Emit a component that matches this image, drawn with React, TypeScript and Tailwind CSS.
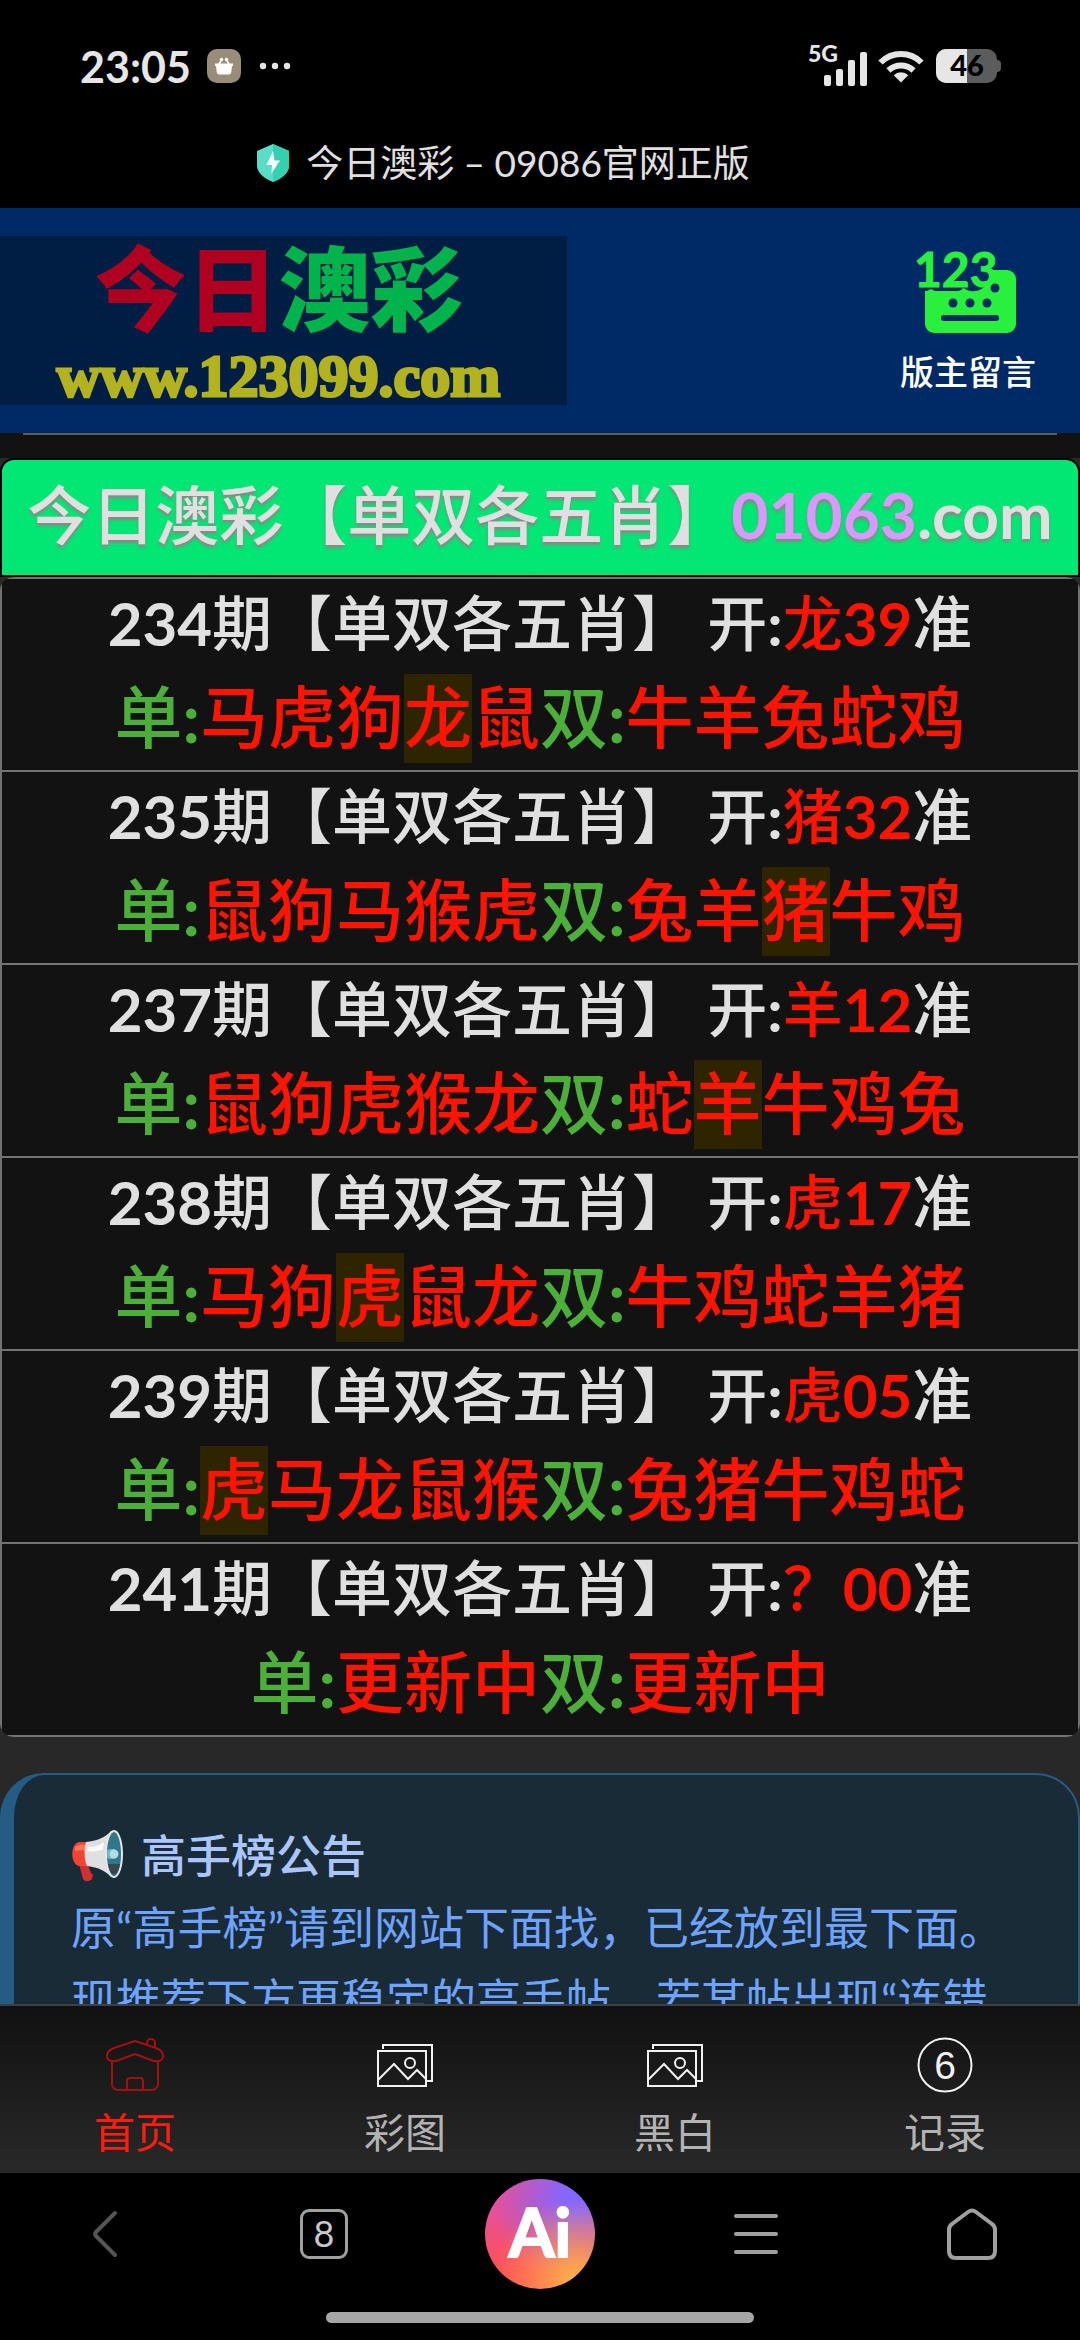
import React from 'react';

interface Draw {
  issue: string;
  animal: string;
  number: string;
  odd: string;
  even: string;
  hit?: string;
}

const draws: Draw[] = [
  { issue: '234', animal: '龙', number: '39', odd: '马虎狗龙鼠', even: '牛羊兔蛇鸡', hit: '龙' },
  { issue: '235', animal: '猪', number: '32', odd: '鼠狗马猴虎', even: '兔羊猪牛鸡', hit: '猪' },
  { issue: '237', animal: '羊', number: '12', odd: '鼠狗虎猴龙', even: '蛇羊牛鸡兔', hit: '羊' },
  { issue: '238', animal: '虎', number: '17', odd: '马狗虎鼠龙', even: '牛鸡蛇羊猪', hit: '虎' },
  { issue: '239', animal: '虎', number: '05', odd: '虎马龙鼠猴', even: '兔猪牛鸡蛇', hit: '虎' },
  { issue: '241', animal: '？', number: '00', odd: '更新中', even: '更新中' },
];

const StatusBar: React.FC = () => (
  <div className="flex items-center justify-between h-[132px] pl-[80px] pr-[78px] text-[#e6e6e6]">
    <div className="flex items-center">
      <span className="text-[43px] leading-none font-bold">23:05</span>
      <svg className="ml-[16px]" width="34" height="34" viewBox="0 0 34 34">
        <rect width="34" height="34" rx="10" fill="#998c78" />
        <path d="M8 14.500h18v2.500h-1l-.8 6.500a2.500 2.500 0 0 1-2.500 2H12.300a2.500 2.500 0 0 1-2.500-2L9 17H8z" fill="#fff" />
        <path d="M12 15l2.500-4M22 15l-2.500-4" stroke="#fff" strokeWidth="1.600" />
        <circle cx="14.500" cy="10.500" r="1.700" fill="#fff" />
        <circle cx="19.500" cy="10.500" r="1.700" fill="#fff" />
      </svg>
      <svg className="ml-[18px]" width="32" height="8" viewBox="0 0 32 8" fill="currentColor">
        <circle cx="4" cy="4" r="3.200" />
        <circle cx="16" cy="4" r="3.200" />
        <circle cx="28" cy="4" r="3.200" />
      </svg>
    </div>
    <div className="flex items-center">
      <svg className="overflow-visible" width="60" height="50" viewBox="0 -4 60 50" fill="currentColor">
        <text x="0" y="17" fontSize="23" fontWeight="900">5G</text>
        <rect x="16" y="30" width="7" height="11" rx="2" />
        <rect x="28" y="24" width="7" height="17" rx="2" />
        <rect x="40" y="15" width="7" height="26" rx="2" />
        <rect x="52" y="7" width="7" height="34" rx="2" />
      </svg>
      <svg className="ml-[10px]" width="46" height="34" viewBox="0 0 46 34" fill="none" stroke="currentColor" strokeWidth="6">
        <path d="M2.500 13.500a29 29 0 0 1 41 0" />
        <path d="M10.500 21.500a18 18 0 0 1 25 0" />
        <path d="M23 33.500l-7.300-7.300a10.500 10.500 0 0 1 14.600 0z" fill="currentColor" stroke="none" />
      </svg>
      <svg className="ml-[12px]" width="66" height="36" viewBox="0 0 66 36">
        <defs>
          <clipPath id="battery">
            <rect y="1" width="61" height="34" rx="10" />
          </clipPath>
        </defs>
        <g clipPath="url(#battery)">
          <rect width="61" height="36" fill="#5c5c5c" />
          <rect width="31" height="36" fill="#e6e6e6" />
        </g>
        <path d="M61 12a4 4 0 0 1 4 4v4a4 4 0 0 1-4 4z" fill="#5c5c5c" />
        <text x="31" y="28" fontSize="29" fontWeight="900" textAnchor="middle" fill="#000">46</text>
      </svg>
    </div>
  </div>
);

const TitleBar: React.FC = () => (
  <div className="flex items-center justify-center gap-[16px] h-[76px] pb-[14px] pr-[74px]">
    <svg width="34" height="40" viewBox="0 0 34 40">
      <path d="M17 1L33 8v15c0 7-8 13-16 16C9 36 1 30 1 23V8z" fill="#5bdcc9" />
      <path d="M17 1L33 8v15c0 7-8 13-16 16z" fill="#35d0b0" />
      <path d="M17 8L10.500 22H16l-.500 8.500L24 17.500h-5.500z" fill="#fff" />
    </svg>
    <h1 className="text-[37px] leading-[56px] text-[#e0e0e0]">今日澳彩 – 09086官网正版</h1>
  </div>
);

const SiteHeader: React.FC = () => (
  <header className="flex items-center justify-between bg-[#002a66] h-[225px] pr-[44px]">
    <a href="#home" className="flex flex-col items-center bg-[#001d43] w-[567px] h-[169px] pr-[10px]">
      <span className="text-[92px] leading-[106px] font-black">
        <span className="text-[#b00020]">今日</span>
        <span className="text-[#00b34a]">澳彩</span>
      </span>
      <span className="font-['Liberation_Serif',serif] text-[60px] leading-[68px] font-bold text-[#b3b31f] [-webkit-text-stroke:3px_#b3b31f]">
        www.123099.com
      </span>
    </a>
    <a href="#message" className="flex flex-col items-center gap-[15px] pt-[4px] text-white">
      <svg className="overflow-visible" width="106" height="84" viewBox="0 0 106 84">
        <rect x="10" y="19" width="91" height="63" rx="9" fill="#28f03c" />
        <path d="M0 0h76v14c3 14-7 28-20 26-4 0-6-3-8-3-2 3-5 3-8 3H20l-4-2-4 2H0z" fill="#002a66" />
        <text x="-1" y="36" fontSize="48" fontWeight="700" fill="#28f03c" stroke="#28f03c" strokeWidth="1">123</text>
        <g fill="#002a66">
          <circle cx="80" cy="37" r="4.500" />
          <circle cx="38" cy="52" r="4.500" />
          <circle cx="55" cy="52" r="4.500" />
          <circle cx="72" cy="52" r="4.500" />
          <rect x="26" y="64" width="58" height="6" rx="3" />
        </g>
      </svg>
      <span className="text-[34px] leading-[44px] font-medium">版主留言</span>
    </a>
  </header>
);

const Zodiac: React.FC<{ text: string; hit?: string }> = ({ text, hit }) => (
  <span className="text-[#ff1400]">
    {text.split('').map((ch) =>
      ch === hit ? (
        <mark key={ch} className="inline-block pb-[3px] -mb-[3px] bg-[#2e2400] text-[#ff1400]">{ch}</mark>
      ) : (
        ch
      )
    )}
  </span>
);

const DrawTable: React.FC = () => (
  <section className="bg-[#2a2a2a]">
    <h2 className="flex items-center justify-center h-[119px] pb-[6px] rounded-t-[14px] border-2 border-black bg-[#02e673] text-[64px] leading-none font-medium text-[#e0e0e0] whitespace-nowrap [text-shadow:0_3px_3px_#888]">
      今日澳彩【单双各五肖】
      <span className="font-bold text-[#d999ff]">01063</span>
      <span className="font-bold">.com</span>
    </h2>
    <div className="rounded-[14px] overflow-hidden">
      <table className="w-full border-separate border-spacing-0 border-x-2 border-b-2 border-[#737373] bg-[#121212] text-center font-medium">
        <tbody>
          {draws.map((d) => (
            <tr key={d.issue}>
              <td className="border-t-2 border-[#737373] p-0 pb-[7px]">
                <p className="text-[60px] leading-[89px] text-[#e0e0e0] whitespace-nowrap">
                  <b>{d.issue}</b>期【单双各五肖】 开<b>:</b>
                  <span className="text-[#ff1400]">{d.animal}<b>{d.number}</b></span>准
                </p>
                <p className="mt-[6px] pb-[3px] text-[68px] leading-[86px] text-[#4caf3a] whitespace-nowrap">
                  单<b>:</b><Zodiac text={d.odd} hit={d.hit} />双<b>:</b><Zodiac text={d.even} hit={d.hit} />
                </p>
              </td>
            </tr>
          ))}
        </tbody>
      </table>
    </div>
  </section>
);

const Megaphone: React.FC = () => (
  <svg width="52" height="52" viewBox="0 0 52 52">
    <path d="M8 34l8-1 4 10 2 2-1 4c-3 3-7 3-9 0z" fill="#d32f2f" />
    <path d="M16 12H8c-9 2-9 22 0 24h9z" fill="#f44336" />
    <path d="M4 17c3-3 8-3 13-2v6C12 20 8 20 4 21z" fill="#ff7555" />
    <path d="M15 12c10-1 19-4 25-11v46c-6-7-15-10-24-11-3-6-3-18-1-24z" fill="#e0e0e0" />
    <path d="M17 17c7 0 12-2 16-5l-1 8c-6 1-11 2-16 1z" fill="#fafafa" />
    <ellipse cx="43" cy="24" rx="8" ry="23" fill="#2f7889" stroke="#e6e6e6" strokeWidth="2" />
    <path d="M37 34c2 14 10 14 12 0z" fill="#37474f" />
    <rect x="36" y="19" width="9" height="10" rx="3" fill="#6fb3c8" />
    <circle cx="43" cy="24" r="4.500" fill="#b3dbe8" />
  </svg>
);

const Notice: React.FC = () => (
  <section className="mt-[36px] rounded-[44px] border-2 border-l-[14px] border-[#235c85] bg-[#192b36] px-[57px] py-[45px] text-[45px] leading-[72px] text-[#6ea3ff]">
    <h3 className="flex items-center gap-[18px] font-medium text-[#abc5ff]">
      <Megaphone />
      高手榜公告
    </h3>
    <p className="whitespace-nowrap">
      原“高手榜”请到网站下面找，已经放到最下面。
      <br />
      现推荐下方更稳定的高手帖，若某帖出现“连错
    </p>
  </section>
);

const HouseIcon: React.FC = () => (
  <svg width="60" height="56" viewBox="0 0 60 56" fill="none" stroke="#a31010" strokeWidth="2" strokeLinejoin="round">
    <path d="M30 4L51 11c9 3 9 13 2 13-3 1-5 0-7-1L30 17 14 23c-2 1-4 2-7 1-7 0-7-10 2-13z" />
    <path d="M42 8V6a4 4 0 0 1 8 0v5" />
    <path d="M7 24v23a6 6 0 0 0 6 6h34a6 6 0 0 0 6-6V24" />
    <path d="M22 53V44a3 3 0 0 1 3-3h10a3 3 0 0 1 3 3v9" />
  </svg>
);

const PictureIcon: React.FC = () => (
  <svg width="60" height="56" viewBox="0 0 60 56" fill="none" stroke="#f2f2f2" strokeWidth="2">
    <rect x="3" y="14" width="48" height="35" />
    <path d="M8 12V8h49v36h-5" />
    <path d="M3 43l16-16 14 15 9-9 9 9" />
    <circle cx="35" cy="26" r="5" />
  </svg>
);

const SixIcon: React.FC = () => (
  <svg width="60" height="56" viewBox="0 0 60 56">
    <circle cx="30" cy="28" r="26.500" fill="none" stroke="#f2f2f2" strokeWidth="2" />
    <text x="30" y="42" fontSize="39" textAnchor="middle" fill="#f2f2f2" className="font-['Liberation_Sans',sans-serif]">6</text>
  </svg>
);

const tabs = [
  { label: '首页', icon: <HouseIcon />, active: true },
  { label: '彩图', icon: <PictureIcon />, active: false },
  { label: '黑白', icon: <PictureIcon />, active: false },
  { label: '记录', icon: <SixIcon />, active: false },
];

const TabBar: React.FC = () => (
  <nav className="grid grid-cols-4 shrink-0 h-[169px] pt-[31px] border-t-2 border-[#404040] bg-gradient-to-b from-[#111111] to-[#292929]">
    {tabs.map((tab) => (
      <a
        key={tab.label}
        href="#tab"
        className={`flex flex-col items-center gap-[12px] text-[41px] leading-[56px] ${tab.active ? 'text-[#ff1d0d]' : 'text-[#b3b3b3]'}`}
      >
        {tab.icon}
        {tab.label}
      </a>
    ))}
  </nav>
);

const BrowserBar: React.FC = () => (
  <footer className="shrink-0 h-[167px] bg-black text-[#a0a0a0]">
    <div className="grid grid-cols-5 place-items-center h-[122px]">
      <button aria-label="返回">
        <svg width="32" height="50" viewBox="0 0 32 50" fill="none" stroke="#555" strokeWidth="4" strokeLinecap="round" strokeLinejoin="round">
          <path d="M23 4L4 23q-2 2 0 4L23 46" />
        </svg>
      </button>
      <button className="flex items-center justify-center w-[48px] h-[50px] pb-[2px] rounded-[9px] border-[3px] border-[#a0a0a0] text-[36px] leading-none text-[#c8c8c8]">
        8
      </button>
      <button className="flex items-center justify-center w-[110px] h-[110px] pb-[4px] rounded-full text-white text-[66px] leading-none font-bold [-webkit-text-stroke:2px_#fff] bg-[radial-gradient(circle_at_82%_92%,#ffb347_0%,#ff9a5a80_35%,transparent_60%),radial-gradient(circle_at_82%_18%,#8566ff_10%,#9a60e0b0_35%,transparent_65%),linear-gradient(170deg,#e8509a_25%,#ff5050_75%)]">
        Ai
      </button>
      <button aria-label="菜单">
        <svg width="46" height="50" viewBox="0 0 46 50" stroke="currentColor" strokeWidth="4" strokeLinecap="round">
          <path d="M3 7h40M3 25h40M3 43h40" />
        </svg>
      </button>
      <button aria-label="主页">
        <svg width="50" height="52" viewBox="0 0 50 52" fill="none" stroke="currentColor" strokeWidth="4" strokeLinejoin="round">
          <path d="M21 4q4-3 8 0l16 12q3 2 3 6v21q0 7-7 7H9q-7 0-7-7V22q0-4 3-6z" />
        </svg>
      </button>
    </div>
    <div className="mx-auto mt-[17px] w-[428px] h-[11px] rounded-full bg-[#a6a6a6]" />
  </footer>
);

const App: React.FC = () => {
  return (
    <div className="flex flex-col h-screen bg-black font-['Lato','Noto_Sans_CJK_SC',sans-serif]">
      <StatusBar />
      <TitleBar />
      <main className="flex-1 min-h-0 overflow-hidden bg-[#282828]">
        <SiteHeader />
        <div className="h-[25px] bg-[#121212]">
          <hr className="mx-[23px] border-t-2 border-[#5e5e56]" />
        </div>
        <DrawTable />
        <Notice />
      </main>
      <TabBar />
      <BrowserBar />
    </div>
  );
};

export default App;
